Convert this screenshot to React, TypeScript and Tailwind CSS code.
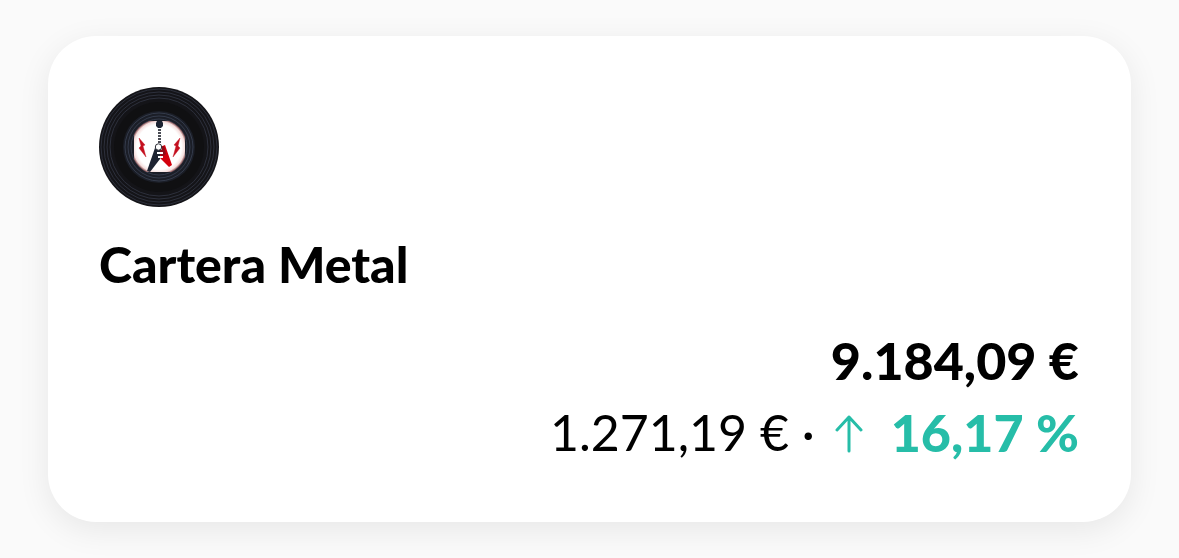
const portfolio = {
  name: 'Cartera Metal',
  balance: '9.184,09 €',
  gain: '1.271,19 €',
  change: '16,17 %',
}

const outerGrooves = [58, 55, 52, 49]
const innerGrooves = [34, 31, 28]

function VinylLogo() {
  return (
    <svg viewBox="0 0 120 120" className="size-[120px]" role="img" aria-label={portfolio.name}>
      <defs>
        <radialGradient id="label">
          <stop offset="80%" stopColor="#ffffff" />
          <stop offset="92%" stopColor="#f5dedd" />
          <stop offset="100%" stopColor="#7d4548" />
        </radialGradient>
        <clipPath id="labelClip">
          <rect x="35" y="34" width="51" height="51" />
        </clipPath>
      </defs>
      <circle cx="60" cy="60" r="60" fill="#141418" />
      {outerGrooves.map((r) => (
        <circle key={r} cx="60" cy="60" r={r} fill="none" stroke="#2d303c" strokeWidth="1" />
      ))}
      <circle cx="60" cy="60" r="45" fill="#101012" />
      <circle cx="60" cy="60" r="36" fill="#1b1e27" />
      {innerGrooves.map((r) => (
        <circle key={r} cx="60" cy="60" r={r} fill="none" stroke="#343b4b" strokeWidth="1" />
      ))}
      <circle cx="60" cy="60" r="28" fill="url(#label)" clipPath="url(#labelClip)" />

      {/* Lightning bolts */}
      <path d="M40 51l6 7-2 1 3 11-7-9 2-2z" fill="#c4101f" stroke="#c4101f" strokeWidth="0.4" />
      <path d="M81 51l-6 7 2 1-3 11 7-9-2-2z" fill="#c4101f" stroke="#c4101f" strokeWidth="0.4" />

      {/* Guitar */}
      <path d="M57 58l-9 26 3 1 10-13V60z" fill="#1d2432" />
      <path d="M61 60l5-2 7 20-3 2-9-9z" fill="#d3000d" />
      <path d="M61 60l4-1 2 8-4 3-2-3z" fill="#8f0c18" />
      <path d="M60.500 39v24" stroke="#ffffff" strokeWidth="4" />
      <path d="M60.500 39v22" stroke="#4a4c54" strokeWidth="3" strokeDasharray="2 1" />
      <path d="M57 36l1-2h5l1 2v3l-2 2h-3l-2-2z" fill="#1d2432" />
      <circle cx="59.500" cy="60" r="3.200" fill="#ffffff" stroke="#30323a" strokeWidth="1" />
      <path d="M58 66h6M59 70h5" stroke="#ffffff" strokeWidth="2" />
    </svg>
  )
}

function ArrowUp() {
  return (
    <svg
      viewBox="0 0 28 40"
      className="mt-1 h-10 w-7"
      fill="none"
      stroke="currentColor"
      strokeWidth="3"
      strokeLinecap="round"
      strokeLinejoin="round"
      aria-hidden="true"
    >
      <path d="M14 37V3M2 16L14 3l12 13" />
    </svg>
  )
}

export default function App() {
  return (
    <main className="min-h-screen bg-[#fafafa] px-12 py-9 font-['Lato',sans-serif] text-[50px] leading-[72px] text-black">
      <article className="rounded-[48px] bg-white pt-[51px] pr-[52px] pb-[54px] pl-[51px] shadow-[0_8px_32px_rgba(0,0,0,0.08)]">
        <VinylLogo />
        <h2 className="mt-[21px] font-black">{portfolio.name}</h2>
        <div className="mt-6 text-right">
          <p className="text-[52px] leading-[72px] font-black">{portfolio.balance}</p>
          <p className="flex items-center justify-end">
            <span>{portfolio.gain} ·</span>
            <span className="ml-5 flex items-center gap-7 text-[52px] leading-[72px] font-black text-[#26bda8]">
              <ArrowUp />
              {portfolio.change}
            </span>
          </p>
        </div>
      </article>
    </main>
  )
}
